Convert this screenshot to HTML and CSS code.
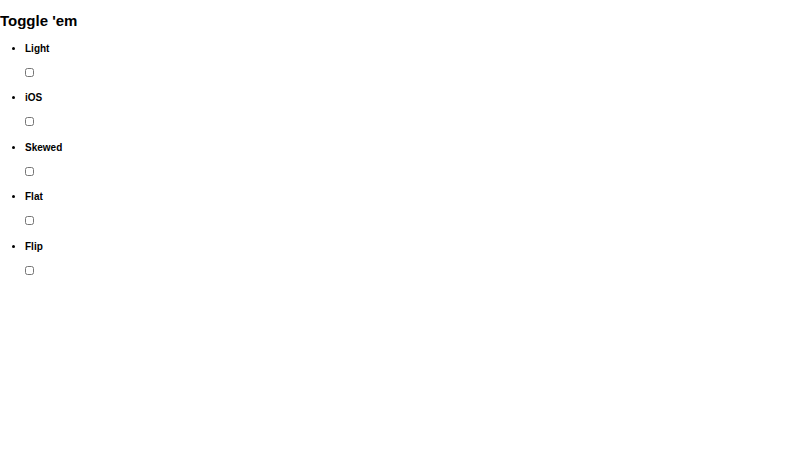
FILE: index.html
```html
<!DOCTYPE html>
<html>
<head>
<meta charset="utf-8">
<link rel="stylesheet" href="styles.css">
</head>
<body>
<h1 class="title">Toggle 'em</h1>
<ul class="toggles">
  <li class="toggle-item"><h4 class="toggle-name">Light</h4><input class="toggle-box" type="checkbox"></li>
  <li class="toggle-item"><h4 class="toggle-name">iOS</h4><input class="toggle-box" type="checkbox"></li>
  <li class="toggle-item"><h4 class="toggle-name">Skewed</h4><input class="toggle-box" type="checkbox"></li>
  <li class="toggle-item"><h4 class="toggle-name">Flat</h4><input class="toggle-box" type="checkbox"></li>
  <li class="toggle-item"><h4 class="toggle-name">Flip</h4><input class="toggle-box" type="checkbox"></li>
</ul>
</body>
</html>
```
FILE: styles.css
```css
html, body {
  margin: 0;
  padding: 0;
  background: #fff;
  color: #000;
  font-family: "Liberation Sans", Arial, sans-serif;
}
.title {
  font-size: 15px;
  font-weight: bold;
  margin: 15px 0 0 0;
  line-height: 12px;
}
.toggles {
  margin: 0;
  padding: 0 0 0 25px;
  list-style: disc;
  font-size: 10px;
}
.toggle-item {
  padding-top: 15.5px;
}
.toggle-name {
  font-size: 10px;
  font-weight: bold;
  margin: 0;
  line-height: 12px;
}
.toggle-box {
  display: block;
  width: 9px;
  height: 9px;
  margin: 13px 0 0 0;
}
```
